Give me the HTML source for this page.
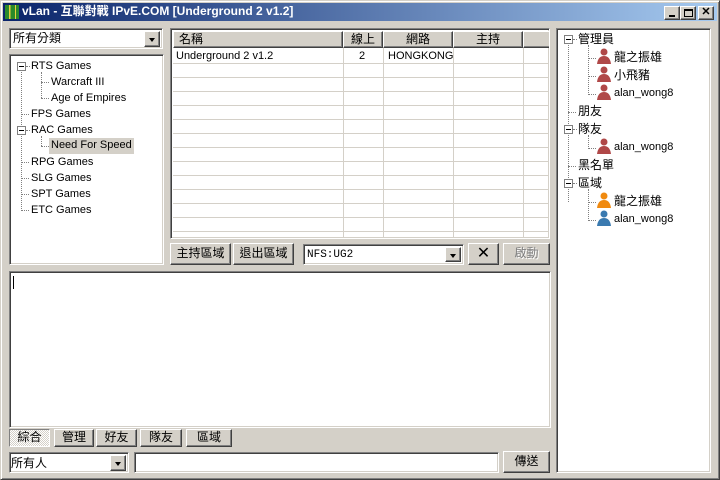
<!DOCTYPE html><html><head><meta charset="utf-8"><style>
*{margin:0;padding:0;box-sizing:border-box}
body{width:720px;height:480px;background:#d4d0c8;position:relative;overflow:hidden;font-family:"Liberation Sans","Noto Sans CJK TC",sans-serif;font-size:11px;color:#000}
.a{position:absolute}
.sunk{position:absolute;background:#fff;border:1px solid;border-color:#808080 #fff #fff #808080;box-shadow:inset 1px 1px #404040,inset -1px -1px #d4d0c8}
.btn{position:absolute;background:#d4d0c8;border:1px solid;border-color:#fff #404040 #404040 #fff;box-shadow:inset -1px -1px #808080;text-align:center;font-size:12px}
.dd{position:absolute;width:16px;background:#d4d0c8;border:1px solid;border-color:#fff #404040 #404040 #fff;box-shadow:inset -1px -1px #808080}
.dd:after{content:"";position:absolute;left:4px;top:6px;border:3.5px solid transparent;border-top:4px solid #000;border-bottom:0}
.t{position:absolute;white-space:nowrap;line-height:14px}
.box{position:absolute;width:9px;height:9px;border:1px solid #808080;background:#fff}
.box:after{content:"";position:absolute;left:1px;top:3px;width:5px;height:1px;background:#000}
.hl{position:absolute;border-top:1px dotted #808080;height:0}
.vl{position:absolute;border-left:1px dotted #808080;width:0}
.hd{position:absolute;top:0;height:17px;background:#d4d0c8;border:1px solid;border-color:#fff #404040 #404040 #fff;box-shadow:inset -1px -1px #808080;font-size:12px;line-height:14px}
.row{position:absolute;left:0;width:376px;height:0;border-top:1px solid #d4d0c8}
.col{position:absolute;top:17px;height:190px;border-left:1px solid #d4d0c8}
.tab{position:absolute;top:429px;height:18px;background:#d4d0c8;border:1px solid;border-color:#fff #404040 #404040 #fff;box-shadow:inset -1px -1px #808080;font-size:12px;text-align:center;line-height:15px}
</style></head><body>
<div class="a" style="left:0;top:0;width:720px;height:480px;border:1px solid;border-color:#d4d0c8 #404040 #404040 #d4d0c8;box-shadow:inset 1px 1px #fff,inset -1px -1px #808080"></div>
<div class="a" style="left:3px;top:3px;width:714px;height:18px;background:linear-gradient(90deg,#0a246a,#a6caf0)"></div>
<div class="a" style="left:5px;top:5px;width:14px;height:14px;background:linear-gradient(90deg,#2a8a2a 0 30%,#e8d040 30% 40%,#2a8a2a 40% 70%,#e8d040 70% 80%,#2a8a2a 80%)"></div>
<div class="t" style="left:22px;top:4px;color:#fff;font-weight:bold;font-size:12px">vLan - 互聯對戰 IPvE.COM [Underground 2 v1.2]</div>
<div class="btn" style="left:664px;top:6px;width:16px;height:14px"><div class="a" style="left:4px;top:8px;width:6px;height:2px;background:#000"></div></div>
<div class="btn" style="left:680px;top:6px;width:16px;height:14px"><div class="a" style="left:3px;top:2px;width:9px;height:8px;border:1px solid #000;border-top-width:2px"></div></div>
<div class="btn" style="left:698px;top:6px;width:16px;height:14px;font-size:11px;line-height:11px;font-weight:bold">✕</div>

<div class="sunk" style="left:9px;top:28px;width:154px;height:21px"><div class="t" style="left:3px;top:2px;font-size:12px">所有分類</div><div class="dd" style="right:2px;top:2px;height:16px"></div></div>

<div class="sunk" style="left:9px;top:54px;width:155px;height:211px">
<div class="vl" style="left:11px;top:11px;height:145px"></div>
<div class="box" style="left:7px;top:7px"></div><div class="hl" style="left:16px;top:11px;width:4px"></div><div class="t" style="left:21px;top:4px">RTS Games</div>
<div class="vl" style="left:31px;top:17px;height:26px"></div>
<div class="hl" style="left:31px;top:27px;width:8px"></div><div class="t" style="left:41px;top:20px">Warcraft III</div>
<div class="hl" style="left:31px;top:43px;width:8px"></div><div class="t" style="left:41px;top:36px">Age of Empires</div>
<div class="hl" style="left:11px;top:59px;width:8px"></div><div class="t" style="left:21px;top:52px">FPS Games</div>
<div class="box" style="left:7px;top:71px"></div><div class="hl" style="left:16px;top:75px;width:4px"></div><div class="t" style="left:21px;top:68px">RAC Games</div>
<div class="vl" style="left:31px;top:81px;height:10px"></div>
<div class="hl" style="left:31px;top:91px;width:8px"></div><div class="t" style="left:39px;top:83px;background:#d4d0c8;padding:0 2px;height:16px;line-height:15px">Need For Speed</div>
<div class="hl" style="left:11px;top:107px;width:8px"></div><div class="t" style="left:21px;top:100px">RPG Games</div>
<div class="hl" style="left:11px;top:123px;width:8px"></div><div class="t" style="left:21px;top:116px">SLG Games</div>
<div class="hl" style="left:11px;top:139px;width:8px"></div><div class="t" style="left:21px;top:132px">SPT Games</div>
<div class="hl" style="left:11px;top:155px;width:8px"></div><div class="t" style="left:21px;top:148px">ETC Games</div>
</div>

<div class="sunk" style="left:170px;top:28px;width:380px;height:211px;overflow:hidden">
<div class="a" style="left:2px;top:2px;width:376px;height:207px">
<div class="hd" style="left:0;width:170px;padding-left:5px">名稱</div>
<div class="hd" style="left:170px;width:40px;text-align:center">線上</div>
<div class="hd" style="left:210px;width:70px;text-align:center">網路</div>
<div class="hd" style="left:280px;width:70px;text-align:center">主持</div>
<div class="hd" style="left:350px;width:30px"></div>
<div class="col" style="left:170px"></div><div class="col" style="left:210px"></div><div class="col" style="left:280px"></div><div class="col" style="left:350px"></div>
<div class="row" style="top:32px"></div><div class="row" style="top:46px"></div><div class="row" style="top:60px"></div><div class="row" style="top:74px"></div><div class="row" style="top:88px"></div><div class="row" style="top:102px"></div><div class="row" style="top:116px"></div><div class="row" style="top:130px"></div><div class="row" style="top:144px"></div><div class="row" style="top:158px"></div><div class="row" style="top:172px"></div><div class="row" style="top:186px"></div><div class="row" style="top:200px"></div>
<div class="t" style="left:3px;top:18px">Underground 2 v1.2</div>
<div class="t" style="left:186px;top:18px">2</div>
<div class="t" style="left:215px;top:18px">HONGKONG</div>
</div></div>

<div class="btn" style="left:170px;top:243px;width:61px;height:22px;line-height:19px">主持區域</div>
<div class="btn" style="left:233px;top:243px;width:61px;height:22px;line-height:19px">退出區域</div>
<div class="sunk" style="left:303px;top:244px;width:161px;height:21px"><div class="t" style="left:3px;top:3px;font-family:'Liberation Mono',monospace;font-size:11px">NFS:UG2</div><div class="dd" style="right:2px;top:2px;height:15px"></div></div>
<div class="btn" style="left:468px;top:243px;width:31px;height:22px;line-height:19px;font-size:16px">✕</div>
<div class="btn" style="left:503px;top:243px;width:47px;height:22px;line-height:19px;color:#808080;text-shadow:1px 1px #fff">啟動</div>

<div class="sunk" style="left:9px;top:271px;width:542px;height:157px"><div class="a" style="left:3px;top:4px;width:1px;height:13px;background:#000"></div></div>

<div class="tab" style="left:9px;width:41px;background:repeating-conic-gradient(#fff 0 25%,#d4d0c8 0 50%) 0 0/2px 2px;border-color:#808080 #fff #fff #808080;box-shadow:none">綜合</div>
<div class="tab" style="left:54px;width:40px">管理</div>
<div class="tab" style="left:96px;width:41px">好友</div>
<div class="tab" style="left:140px;width:42px">隊友</div>
<div class="tab" style="left:186px;width:46px">區域</div>

<div class="sunk" style="left:9px;top:452px;width:120px;height:21px"><div class="t" style="left:1px;top:3px;font-size:12px">所有人</div><div class="dd" style="right:2px;top:2px;height:16px"></div></div>
<div class="sunk" style="left:134px;top:452px;width:365px;height:21px"></div>
<div class="btn" style="left:503px;top:451px;width:47px;height:22px;line-height:19px">傳送</div>

<div class="sunk" style="left:556px;top:28px;width:155px;height:445px">
<div class="vl" style="left:11px;top:16px;height:157px"></div>
<div class="box" style="left:7px;top:6px"></div><div class="hl" style="left:16px;top:10px;width:4px"></div><div class="t" style="left:21px;top:3px;font-size:12px">管理員</div>
<div class="vl" style="left:31px;top:16px;height:50px"></div>
<div class="hl" style="left:31px;top:29px;width:8px"></div><div class="t" style="left:57px;top:21px;font-size:12px">龍之振雄</div>
<div class="hl" style="left:31px;top:47px;width:8px"></div><div class="t" style="left:57px;top:39px;font-size:12px">小飛豬</div>
<div class="hl" style="left:31px;top:65px;width:8px"></div><div class="t" style="left:57px;top:57px">alan_wong8</div>
<div class="hl" style="left:11px;top:83px;width:8px"></div><div class="t" style="left:21px;top:75px;font-size:12px">朋友</div>
<div class="box" style="left:7px;top:96px"></div><div class="hl" style="left:16px;top:100px;width:4px"></div><div class="t" style="left:21px;top:93px;font-size:12px">隊友</div>
<div class="vl" style="left:31px;top:106px;height:14px"></div>
<div class="hl" style="left:31px;top:119px;width:8px"></div><div class="t" style="left:57px;top:111px">alan_wong8</div>
<div class="hl" style="left:11px;top:137px;width:8px"></div><div class="t" style="left:21px;top:129px;font-size:12px">黑名單</div>
<div class="box" style="left:7px;top:150px"></div><div class="hl" style="left:16px;top:154px;width:4px"></div><div class="t" style="left:21px;top:147px;font-size:12px">區域</div>
<div class="vl" style="left:31px;top:160px;height:32px"></div>
<div class="hl" style="left:31px;top:173px;width:8px"></div><div class="t" style="left:57px;top:165px;font-size:12px">龍之振雄</div>
<div class="hl" style="left:31px;top:191px;width:8px"></div><div class="t" style="left:57px;top:183px">alan_wong8</div>
<svg class="a" style="left:39px;top:19px" width="18" height="180" viewBox="0 0 18 180">
<defs><g id="p"><circle cx="8" cy="4" r="3.5"/><path d="M1 16 Q2 8 8 8 Q14 8 15 16Z"/></g></defs>
<use href="#p" y="0" fill="#b04848"/><use href="#p" y="18" fill="#b04848"/><use href="#p" y="36" fill="#b04848"/><use href="#p" y="90" fill="#b04848"/><use href="#p" y="144" fill="#f08a10"/><use href="#p" y="162" fill="#3a7ab0"/>
</svg>
</div>
</body></html>
